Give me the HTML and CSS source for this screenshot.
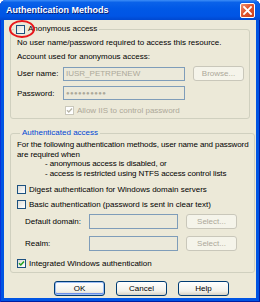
FILE: index.html
```html
<!DOCTYPE html>
<html lang="en">
<head>
    <meta charset="UTF-8">
    <meta name="viewport" content="width=device-width, initial-scale=1.0">
    <title>Authentication Methods</title>
    <link rel="stylesheet" href="styles.css">
</head>
<body>
    <div class="window">
        <div class="titlebar">
            <span class="title">Authentication Methods</span>
            <span class="close">
                <svg width="9" height="9" viewBox="0 0 9 9"><path d="M1 1L8 8M8 1L1 8" stroke="#fff" stroke-width="1.8" stroke-linecap="square"/></svg>
            </span>
        </div>

        <div class="client">
            <!-- Anonymous access -->
            <fieldset class="group group-anon">
                <legend class="legend-check"><span class="box"></span>Anonymous access</legend>
                <p class="line first">No user name/password required to access this resource.</p>
                <p class="line second">Account used for anonymous access:</p>
                <div class="field-row row-user">
                    <span class="label">User name:</span>
                    <span class="input input-wide">IUSR_PETRPENEW</span>
                    <span class="btn disabled">Browse...</span>
                </div>
                <div class="field-row row-pass">
                    <span class="label">Password:</span>
                    <span class="input input-wide dots">&#9679;&#9679;&#9679;&#9679;&#9679;&#9679;&#9679;&#9679;&#9679;&#9679;</span>
                </div>
                <div class="check-row row-allow disabled-text">
                    <span class="box box-disabled">
                        <svg width="7" height="7" viewBox="0 0 7 7"><path d="M1 3.2L2.8 5L6 1.6" fill="none" stroke="#b8b6a8" stroke-width="1.4"/></svg>
                    </span>
                    Allow IIS to control password
                </div>
            </fieldset>

            <!-- Authenticated access -->
            <fieldset class="group group-auth">
                <legend class="legend-text">Authenticated access</legend>
                <p class="note">For the following authentication methods, user name and password<br>are required when</p>
                <p class="note indent">- anonymous access is disabled, or</p>
                <p class="note indent">- access is restricted using NTFS access control lists</p>
                <div class="check-row row-digest">
                    <span class="box"></span>
                    Digest authentication for Windows domain servers
                </div>
                <div class="check-row row-basic">
                    <span class="box"></span>
                    Basic authentication (password is sent in clear text)
                </div>
                <div class="field-row row-domain">
                    <span class="label label-sub">Default domain:</span>
                    <span class="input input-narrow"></span>
                    <span class="btn disabled">Select...</span>
                </div>
                <div class="field-row row-realm">
                    <span class="label label-sub">Realm:</span>
                    <span class="input input-narrow"></span>
                    <span class="btn disabled">Select...</span>
                </div>
                <div class="check-row row-integrated">
                    <span class="box">
                        <svg width="7" height="7" viewBox="0 0 7 7"><path d="M1 3.2L2.8 5L6 1.6" fill="none" stroke="#21a121" stroke-width="1.5"/></svg>
                    </span>
                    Integrated Windows authentication
                </div>
            </fieldset>

            <div class="buttons">
                <span class="btn default">OK</span>
                <span class="btn">Cancel</span>
                <span class="btn">Help</span>
            </div>

            <!-- red annotation circle -->
            <span class="marker"></span>
        </div>
    </div>
</body>
</html>
```

FILE: styles.css
```css
body {
    margin: 0;
    background: #fff;
    font-family: "Liberation Sans", Arial, sans-serif;
    font-size: 8px;
    color: #000;
}
.window {
    width: 260px;
    height: 302px;
    box-sizing: border-box;
    background: #0054e3;
    border-radius: 6px 6px 0 0;
    padding: 0 4px 4px;
    display: flex;
    flex-direction: column;
    box-shadow: inset 1px 0 0 #0831d9, inset -1px 0 0 #001ea0, inset 0 -1px 0 #001ea0;
}
.titlebar {
    height: 20px;
    margin: 0 -4px;
    padding: 0 5px 0 6px;
    display: flex;
    align-items: center;
    justify-content: space-between;
    border-radius: 6px 6px 0 0;
    background: linear-gradient(#3d8ef7 0%, #0a62e9 12%, #0058e6 45%, #0055e5 80%, #0048d0 100%);
}
.title {
    color: #fff;
    font-weight: bold;
    font-size: 9px;
    text-shadow: 1px 1px 0 #0a1e74;
}
.close {
    width: 13px;
    height: 13px;
    border: 1px solid #fff;
    border-radius: 2px;
    background: linear-gradient(135deg, #f0926f 0%, #e0552f 45%, #c9401c 100%);
    display: flex;
    align-items: center;
    justify-content: center;
}
.client {
    position: relative;
    flex: 1;
    background: #ece9d8;
    padding: 0 6px;
}
.group {
    margin: 4px 0 0;
    padding: 0 5px 3px 6px;
    border: 1px solid #d0d0bf;
    border-radius: 3px;
}
.group-auth {
    margin-top: 9px;
    padding-bottom: 4px;
}
legend {
    padding: 0 2px;
    margin-left: -3px;
    line-height: 10px;
}
.legend-check {
    display: flex;
    align-items: center;
    gap: 3px;
}
.legend-text {
    color: #0046d5;
    margin-left: 3px;
}
.line, .note {
    margin: 0;
    line-height: 10px;
}
.line.first { margin-top: 4px; }
.line.second { margin-top: 4px; }
.note {
    line-height: 9.5px;
    white-space: nowrap;
    letter-spacing: -0.1px;
}
.note:first-of-type { margin-top: 2px; }
.indent { padding-left: 28px; }

.box {
    width: 7px;
    height: 7px;
    border: 1px solid #1c5180;
    background: linear-gradient(135deg, #dcdcd7, #fff);
    display: inline-flex;
    align-items: center;
    justify-content: center;
    flex: none;
}
.box-disabled {
    border-color: #cac8bb;
    background: #fff;
}
.check-row {
    display: flex;
    align-items: center;
    gap: 3px;
    height: 10px;
}
.disabled-text { color: #aca899; }
.row-allow { margin: 5px 0 0 48px; }
.row-digest { margin-top: 6px; }
.row-basic { margin-top: 5px; }
.row-integrated { margin-top: 7px; }

.field-row {
    display: flex;
    align-items: center;
}
.row-user { margin-top: 4px; }
.row-pass { margin-top: 5px; }
.row-domain { margin-top: 5px; }
.row-realm { margin-top: 7px; }
.label { width: 46px; flex: none; }
.label-sub { width: 72px; padding-left: 8px; box-sizing: border-box; }
.input {
    box-sizing: border-box;
    height: 14px;
    border: 1px solid #7f9db9;
    background: #ebe9da;
    color: #aca899;
    padding: 0 2px;
    display: flex;
    align-items: center;
}
.input-wide { width: 122px; }
.input-narrow { width: 89px; height: 15px; }
.dots {
    font-size: 6px;
    letter-spacing: 0.4px;
}
.btn {
    box-sizing: border-box;
    width: 51px;
    height: 15px;
    margin-left: 8px;
    display: flex;
    align-items: center;
    justify-content: center;
    border: 1px solid #003c74;
    border-radius: 3px;
    background: linear-gradient(#fff 0%, #f2f1ea 70%, #d8d2c3 100%);
}
.btn.disabled {
    border-color: #c9c7ba;
    background: #f5f4ea;
    color: #aca899;
}
.btn.default {
    box-shadow: inset 0 0 0 1px #9fbff5, inset 0 -1px 0 1px #6a8ee8;
}
.buttons {
    display: flex;
    margin-top: 8px;
    padding-left: 44px;
}
.buttons .btn:first-child { margin-left: 0; }
.buttons .btn + .btn { margin-left: 11px; }

.marker {
    position: absolute;
    left: 5px;
    top: 0;
    width: 22px;
    height: 14px;
    border: 2px solid #e8161b;
    border-radius: 50%;
}
```
